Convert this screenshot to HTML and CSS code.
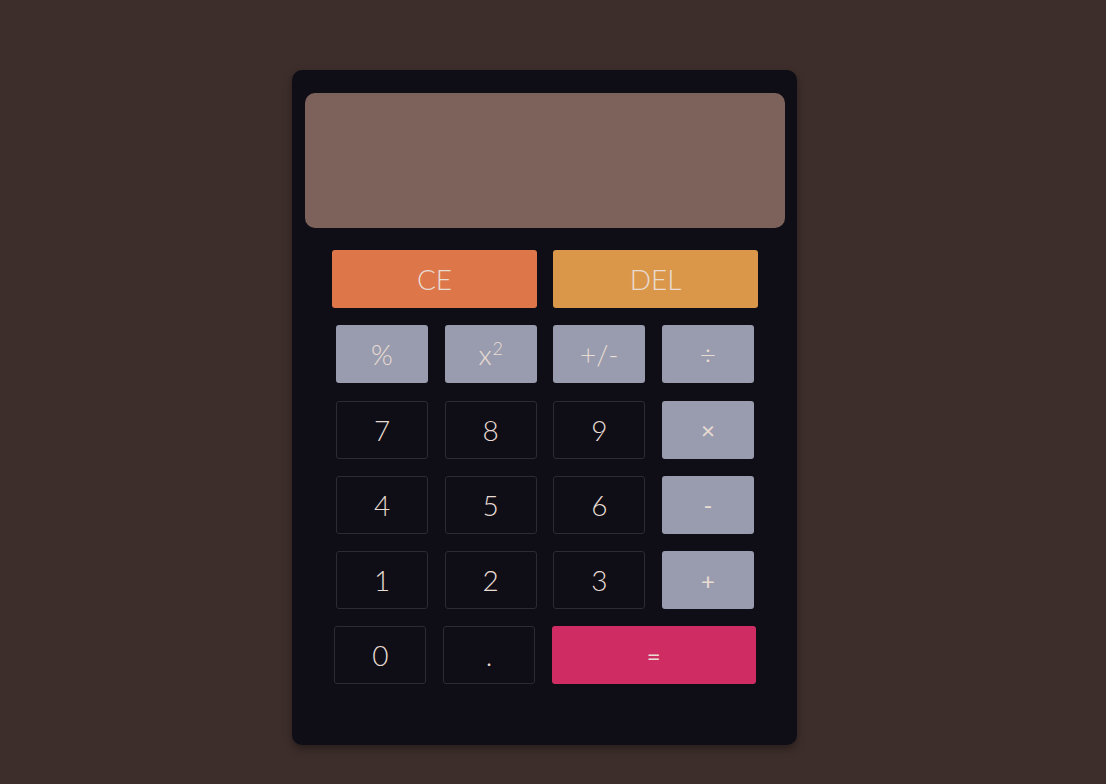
FILE: index.html
```html
<!DOCTYPE html>
<html>
<head>
<meta charset="utf-8">
<link rel="stylesheet" href="styles.css">
</head>
<body>
<div class="calc">
  <div class="display"></div>
  <div class="row top">
    <button class="btn wide ce">CE</button>
    <button class="btn wide del">DEL</button>
  </div>
  <div class="row">
    <button class="btn op">%</button>
    <button class="btn op">x<sup>2</sup></button>
    <button class="btn op">+/-</button>
    <button class="btn op">÷</button>
  </div>
  <div class="row">
    <button class="btn num">7</button>
    <button class="btn num">8</button>
    <button class="btn num">9</button>
    <button class="btn op small">×</button>
  </div>
  <div class="row">
    <button class="btn num">4</button>
    <button class="btn num">5</button>
    <button class="btn num">6</button>
    <button class="btn op small">-</button>
  </div>
  <div class="row">
    <button class="btn num">1</button>
    <button class="btn num">2</button>
    <button class="btn num">3</button>
    <button class="btn op small">+</button>
  </div>
  <div class="row last">
    <button class="btn num">0</button>
    <button class="btn num">.</button>
    <button class="btn eq">=</button>
  </div>
</div>
</body>
</html>
```
FILE: styles.css
```css
html, body {
  margin: 0;
  padding: 0;
}
body {
  background: #3d2e2b;
  width: 1106px;
  height: 784px;
  font-family: "Lato", "Noto Sans", sans-serif;
}
.calc {
  margin: 70px 0 0 292px;
  width: 505px;
  height: 675px;
  box-sizing: border-box;
  background: #0f0e17;
  border-radius: 10px;
  padding: 23px 12px 0 13px;
  box-shadow: 0 4px 8px rgba(0, 0, 0, 0.35);
}
.display {
  height: 135px;
  background: #7d625c;
  border-radius: 10px;
  margin-bottom: 22px;
}
.row {
  display: flex;
  justify-content: center;
  gap: 16.67px;
  margin-bottom: 17.3px;
}
.row.top {
  gap: 16px;
}
.btn {
  height: 58px;
  width: 92px;
  border: 1px solid transparent;
  border-radius: 3px;
  box-sizing: border-box;
  font-family: "Lato", "Noto Sans", sans-serif;
  font-weight: 300;
  font-size: 28px;
  color: #e9dcd3;
  padding: 0;
  display: flex;
  align-items: center;
  justify-content: center;
}
.btn sup {
  font-size: 18px;
  line-height: 0;
  position: relative;
  top: -6px;
  margin-left: 1px;
}
.wide {
  width: 205px;
}
.ce { background: #dd774a; }
.del { background: #da9749; }
.op { background: #999cae; }
.small {
  font-size: 24px;
  font-weight: 400;
}
.num {
  background: #0f0e17;
  border-color: #2c2b33;
}
.eq {
  width: 204px;
  background: #cf2c64;
  font-size: 24px;
  font-weight: 400;
}
```
